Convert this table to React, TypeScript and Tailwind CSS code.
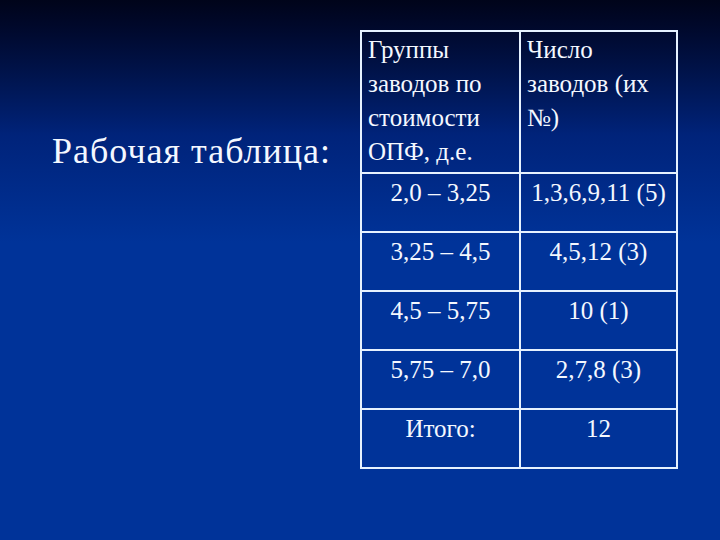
import React from 'react';

const rows = [
  { range: '2,0 – 3,25', count: '1,3,6,9,11 (5)' },
  { range: '3,25 – 4,5', count: '4,5,12 (3)' },
  { range: '4,5 – 5,75', count: '10 (1)' },
  { range: '5,75 – 7,0', count: '2,7,8 (3)' },
  { range: 'Итого:', count: '12' },
];

const cell = 'border-r-2 border-b-2 border-[#e6f2ff] font-[Liberation_Serif] text-[25px] leading-[34px]';

export default function App() {
  return (
    <div className="w-[720px] h-[540px] overflow-hidden text-[#f4f8ff] font-[Liberation_Serif] bg-linear-to-b from-[#00041a] via-[#00237a] via-25% to-[#003399] to-45%">
      <div className="flex pt-[30px]">
        {/* Title */}
        <div className="w-[360px] pl-[52px] pt-[101px]">
          <div className="font-[Liberation_Serif] text-[36px] leading-[40px] tracking-[1px] whitespace-nowrap">Рабочая таблица:</div>
        </div>

        {/* Table */}
        <div className="grid grid-cols-[159px_157px] w-[318px] border-t-2 border-l-2 border-[#e6f2ff]">
          <div className={`${cell} h-[142px] pl-[6px] pt-[1px] whitespace-nowrap`}>
            <div>Группы</div>
            <div>заводов по</div>
            <div>стоимости</div>
            <div>ОПФ, д.е.</div>
          </div>
          <div className={`${cell} h-[142px] pl-[6px] pt-[1px] whitespace-nowrap`}>
            <div>Число</div>
            <div>заводов (их</div>
            <div>№)</div>
          </div>
          {rows.map((r) => (
            <React.Fragment key={r.range}>
              <div className={`${cell} h-[59px] text-center pt-[2px]`}>{r.range}</div>
              <div className={`${cell} h-[59px] text-center pt-[2px]`}>{r.count}</div>
            </React.Fragment>
          ))}
        </div>
      </div>
    </div>
  );
}
